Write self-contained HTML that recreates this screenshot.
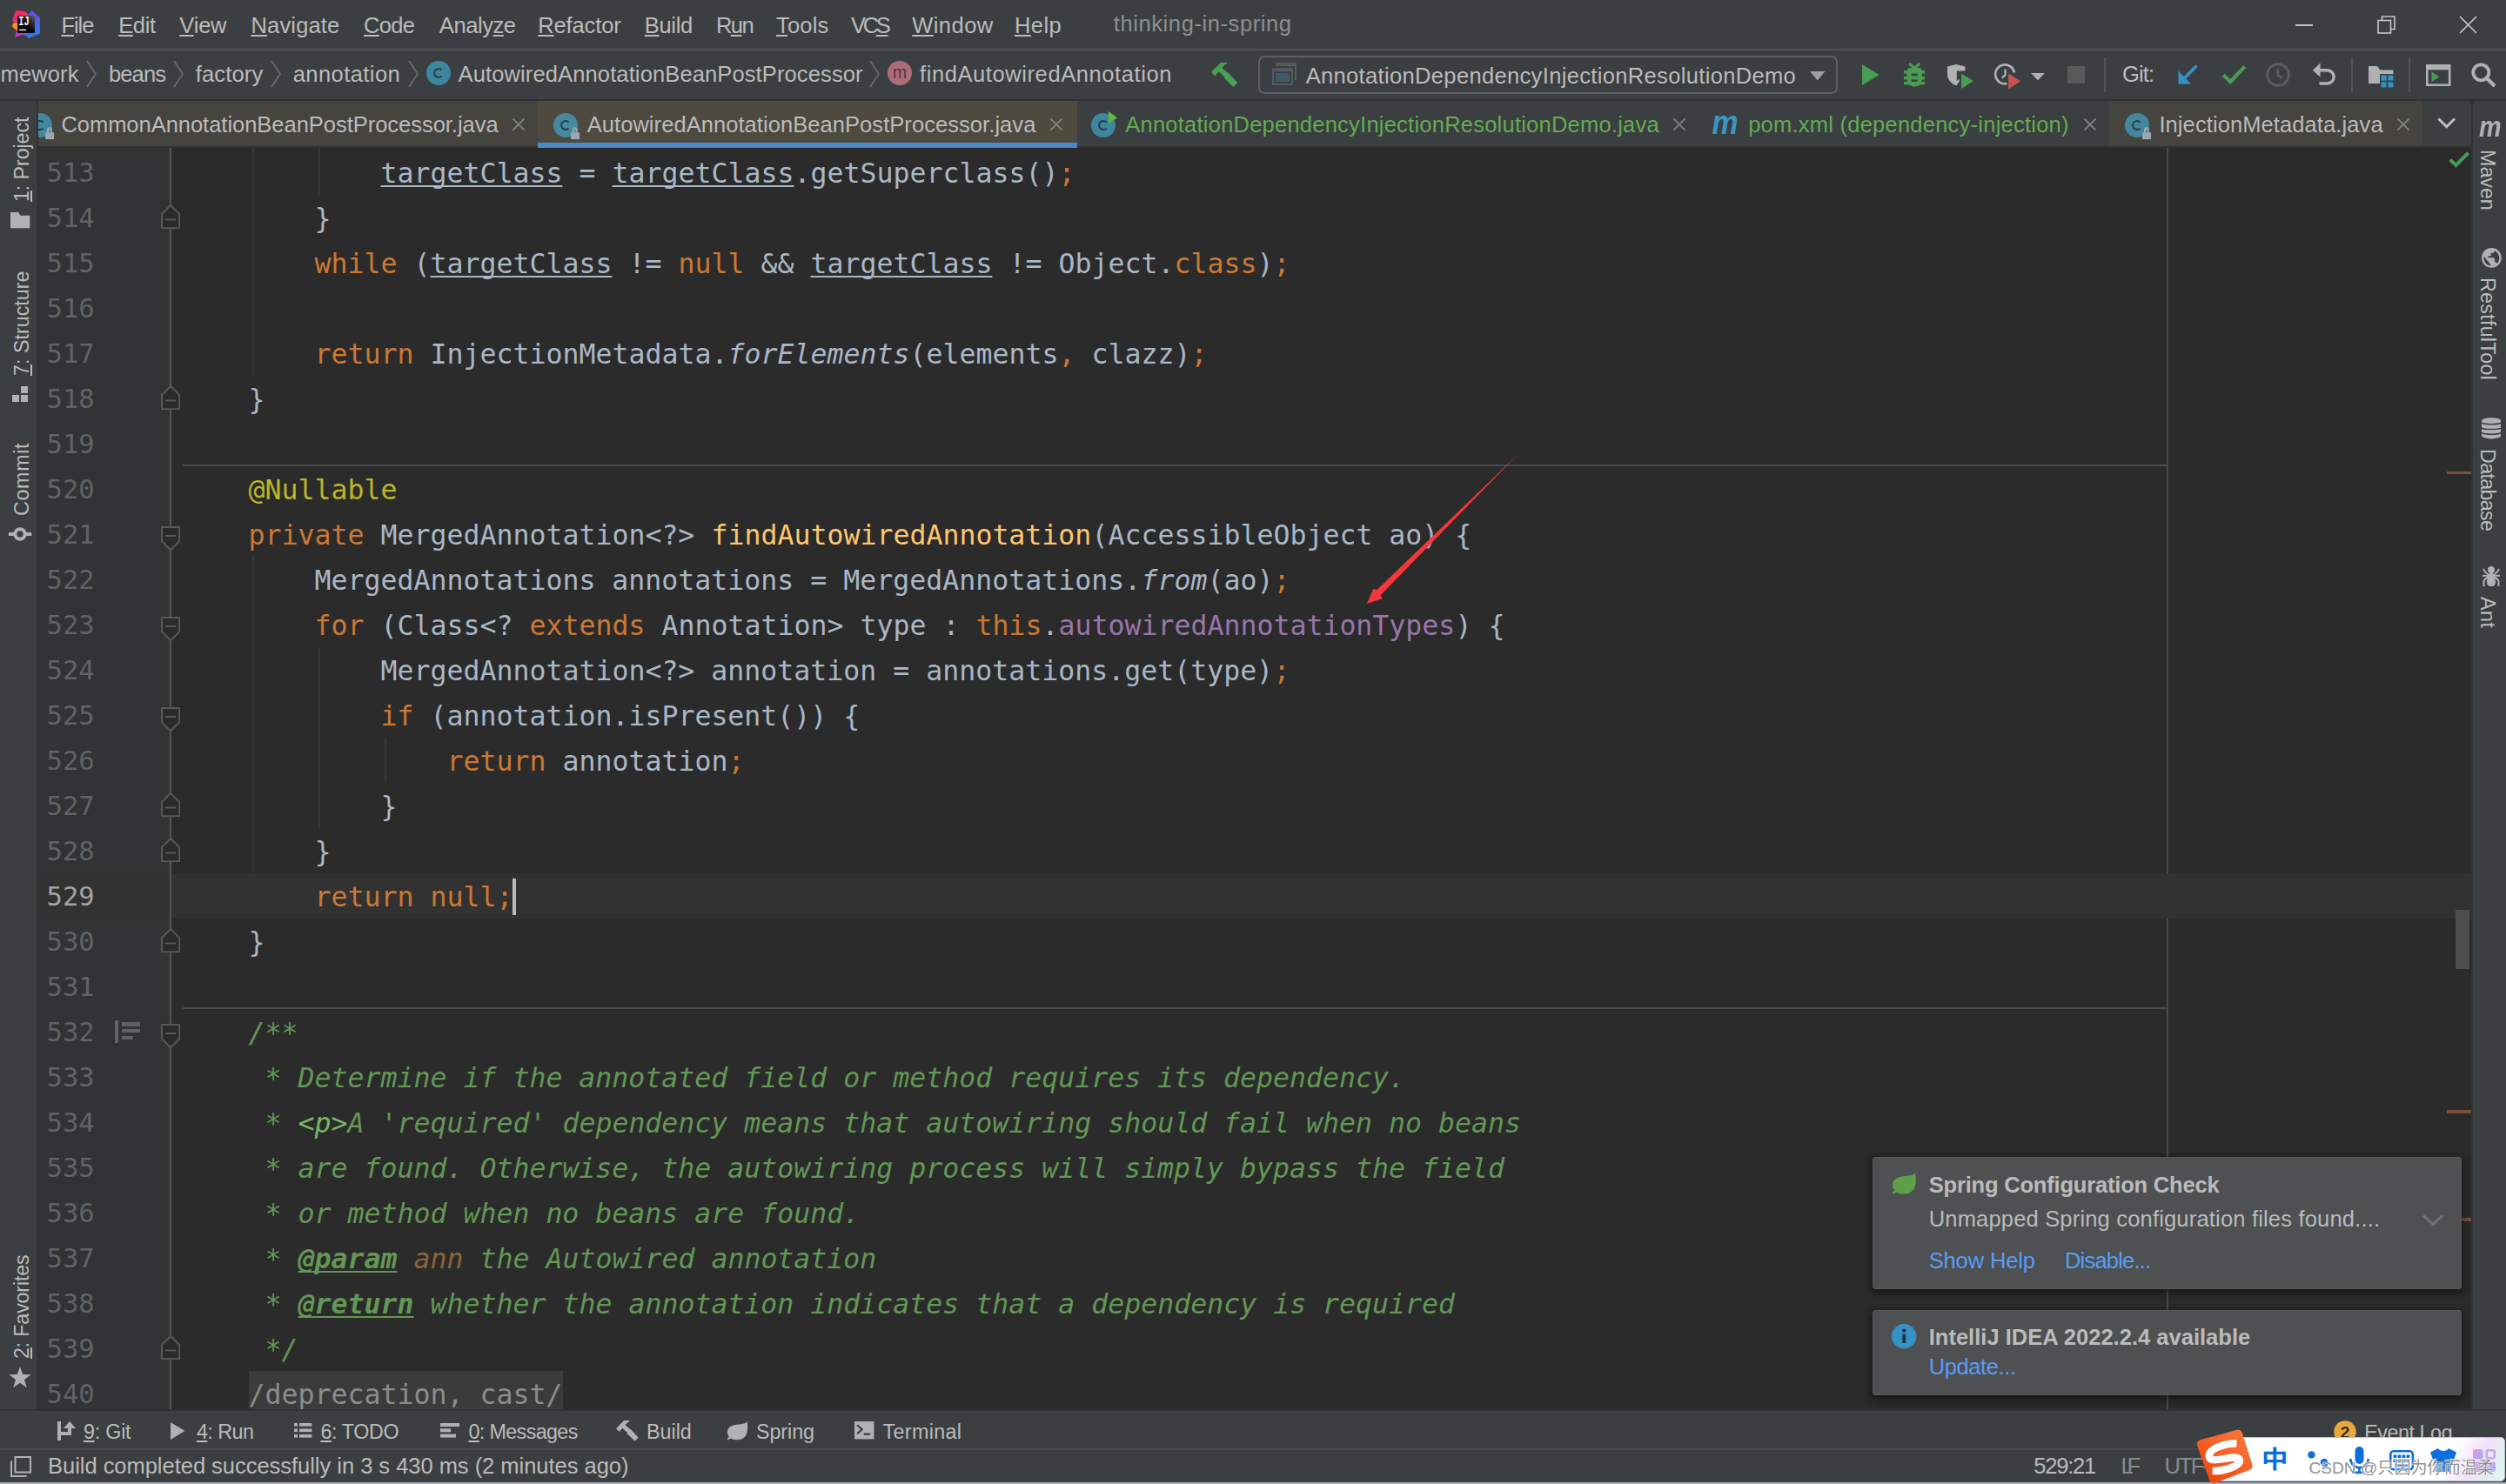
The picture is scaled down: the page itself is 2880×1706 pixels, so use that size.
<!DOCTYPE html>
<html lang="en"><head><meta charset="utf-8"><title>thinking-in-spring</title><style>
html,body{margin:0;padding:0}
body{width:2880px;height:1706px;overflow:hidden;background:#3c3f41;position:relative;font-family:"Liberation Sans",sans-serif;}
.t{position:absolute;white-space:pre;font-family:"Liberation Sans",sans-serif;display:block}
.t u{text-decoration:underline;text-decoration-thickness:2px;text-underline-offset:2.4px}
.c{position:absolute;white-space:pre;font-family:"DejaVu Sans Mono","Liberation Mono",monospace;font-size:31.56px;height:52px;line-height:52px;display:block}
.un{text-decoration:underline;text-decoration-thickness:2px;text-underline-offset:3px;text-decoration-skip-ink:none}
#ed{position:absolute;left:0;top:0;width:2880px;height:1706px}
</style></head>
<body>
<div style="position:absolute;left:0px;top:56px;width:2880px;height:2px;background:#515151;"></div>
<svg style="position:absolute;left:12px;top:10px;" width="36" height="36" viewBox="12 10 36 36"><defs><linearGradient id="lg1" x1="0.6" y1="0" x2="0.2" y2="1"><stop offset="0" stop-color="#ff2757"/><stop offset="1" stop-color="#e0308f"/></linearGradient>
<linearGradient id="lg2" x1="0" y1="0" x2="0.6" y2="1"><stop offset="0" stop-color="#2f6ef0"/><stop offset="0.45" stop-color="#6a4fe0"/><stop offset="1" stop-color="#2a7cf2"/></linearGradient>
<linearGradient id="lg3" x1="0" y1="1" x2="1" y2="0"><stop offset="0" stop-color="#a83cd8"/><stop offset="1" stop-color="#e03a9c"/></linearGradient>
<linearGradient id="lg4" x1="0" y1="1" x2="1" y2="0"><stop offset="0.45" stop-color="#000"/><stop offset="1" stop-color="#5a5a5a"/></linearGradient></defs>
<polygon points="18.2,12.1 28.8,13 33.2,17.6 33.2,26.5 19,26.5 14.1,23.9" fill="url(#lg1)"/>
<polygon points="15.4,26.2 22,26.2 22,35 19,34.9 13.9,30.5" fill="#fc8a1c"/>
<polygon points="36.5,11.9 45.9,20.2 45.9,38.5 33.5,43.9 27,39.5 32.6,16.4" fill="url(#lg2)"/>
<polygon points="19.6,34 31,36 29.3,38.6 16.9,42.9" fill="url(#lg3)"/>
<rect x="20.2" y="18.2" width="19.7" height="19.7" fill="url(#lg4)"/>
<rect x="22.1" y="33.7" width="8" height="1.4" fill="#fff"/>
<text x="21.2" y="29.1" font-family="Liberation Mono, monospace" font-weight="bold" font-size="14" fill="#fff" textLength="12.4" lengthAdjust="spacingAndGlyphs">IJ</text></svg>
<span class="t mn" style="left:70.40px;top:12.66px;height:33px;line-height:33px;font-size:25.5px;letter-spacing:-1.060px;color:#bbbbbb;"><u>F</u>ile</span>
<span class="t mn" style="left:136.20px;top:12.66px;height:33px;line-height:33px;font-size:25.5px;letter-spacing:-0.379px;color:#bbbbbb;"><u>E</u>dit</span>
<span class="t mn" style="left:206.30px;top:12.66px;height:33px;line-height:33px;font-size:25.5px;letter-spacing:-0.192px;color:#bbbbbb;"><u>V</u>iew</span>
<span class="t mn" style="left:288.50px;top:12.66px;height:33px;line-height:33px;font-size:25.5px;letter-spacing:0.150px;color:#bbbbbb;"><u>N</u>avigate</span>
<span class="t mn" style="left:418.00px;top:12.66px;height:33px;line-height:33px;font-size:25.5px;letter-spacing:-0.657px;color:#bbbbbb;"><u>C</u>ode</span>
<span class="t mn" style="left:504.80px;top:12.66px;height:33px;line-height:33px;font-size:25.5px;letter-spacing:-0.422px;color:#bbbbbb;">Analy<u>z</u>e</span>
<span class="t mn" style="left:618.30px;top:12.66px;height:33px;line-height:33px;font-size:25.5px;letter-spacing:-0.138px;color:#bbbbbb;"><u>R</u>efactor</span>
<span class="t mn" style="left:740.80px;top:12.66px;height:33px;line-height:33px;font-size:25.5px;letter-spacing:-0.328px;color:#bbbbbb;"><u>B</u>uild</span>
<span class="t mn" style="left:823.00px;top:12.66px;height:33px;line-height:33px;font-size:25.5px;letter-spacing:-1.583px;color:#bbbbbb;">R<u>u</u>n</span>
<span class="t mn" style="left:892.00px;top:12.66px;height:33px;line-height:33px;font-size:25.5px;letter-spacing:0.196px;color:#bbbbbb;"><u>T</u>ools</span>
<span class="t mn" style="left:978.00px;top:12.66px;height:33px;line-height:33px;font-size:25.5px;letter-spacing:-3.314px;color:#bbbbbb;">VC<u>S</u></span>
<span class="t mn" style="left:1048.20px;top:12.66px;height:33px;line-height:33px;font-size:25.5px;letter-spacing:0.469px;color:#bbbbbb;"><u>W</u>indow</span>
<span class="t mn" style="left:1166.00px;top:12.66px;height:33px;line-height:33px;font-size:25.5px;letter-spacing:0.416px;color:#bbbbbb;"><u>H</u>elp</span>
<span class="t " style="left:1279.80px;top:10.66px;height:33px;line-height:33px;font-size:25.5px;letter-spacing:0.589px;color:#8d8f90;">thinking-in-spring</span>
<div style="position:absolute;left:2638px;top:28px;width:20px;height:2px;background:#c4c6c7;"></div>
<svg style="position:absolute;left:2732px;top:18px;" width="21" height="21" viewBox="0 0 21 21"><path d="M5.5 5.5 V1 H20 V15.5 H15.5" fill="none" stroke="#c4c6c7" stroke-width="1.6"/><rect x="1" y="5.5" width="14.5" height="14.5" fill="none" stroke="#c4c6c7" stroke-width="1.6"/></svg>
<svg style="position:absolute;left:2826px;top:18px;" width="21" height="21" viewBox="0 0 21 21"><path d="M1 1 L20 20 M20 1 L1 20" stroke="#c4c6c7" stroke-width="1.7" fill="none"/></svg>
<div style="position:absolute;left:0px;top:114px;width:2880px;height:2px;background:#2f3132;"></div>
<span class="t " style="left:0.60px;top:68.66px;height:33px;line-height:33px;font-size:25.5px;letter-spacing:0.115px;color:#bbbbbb;">mework</span>
<span class="t " style="left:125.00px;top:68.66px;height:33px;line-height:33px;font-size:25.5px;letter-spacing:-0.872px;color:#bbbbbb;">beans</span>
<span class="t " style="left:224.70px;top:68.66px;height:33px;line-height:33px;font-size:25.5px;letter-spacing:0.162px;color:#bbbbbb;">factory</span>
<span class="t " style="left:336.70px;top:68.66px;height:33px;line-height:33px;font-size:25.5px;letter-spacing:0.432px;color:#bbbbbb;">annotation</span>
<span class="t " style="left:526.60px;top:68.66px;height:33px;line-height:33px;font-size:25.5px;letter-spacing:0.123px;color:#bbbbbb;">AutowiredAnnotationBeanPostProcessor</span>
<span class="t " style="left:1057.00px;top:68.66px;height:33px;line-height:33px;font-size:25.5px;letter-spacing:0.589px;color:#bbbbbb;">findAutowiredAnnotation</span>
<svg style="position:absolute;left:98px;top:68px;" width="14" height="34" viewBox="0 0 14 34"><path d="M2 2 L12 17.0 L2 32" fill="none" stroke="#6a6e71" stroke-width="1.6"/></svg>
<svg style="position:absolute;left:198px;top:68px;" width="14" height="34" viewBox="0 0 14 34"><path d="M2 2 L12 17.0 L2 32" fill="none" stroke="#6a6e71" stroke-width="1.6"/></svg>
<svg style="position:absolute;left:310px;top:68px;" width="14" height="34" viewBox="0 0 14 34"><path d="M2 2 L12 17.0 L2 32" fill="none" stroke="#6a6e71" stroke-width="1.6"/></svg>
<svg style="position:absolute;left:468.3px;top:68px;" width="14" height="34" viewBox="0 0 14 34"><path d="M2 2 L12 17.0 L2 32" fill="none" stroke="#6a6e71" stroke-width="1.6"/></svg>
<svg style="position:absolute;left:998px;top:68px;" width="14" height="34" viewBox="0 0 14 34"><path d="M2 2 L12 17.0 L2 32" fill="none" stroke="#6a6e71" stroke-width="1.6"/></svg>
<svg style="position:absolute;left:490px;top:70px;overflow:visible;" width="34" height="34" viewBox="0 0 34 34"><circle cx="14" cy="14" r="14" fill="#40b6e0" fill-opacity="0.6"/><path d="M17.6 10.5 A5 5 0 1 0 17.6 17.5" fill="none" stroke="#231f20" stroke-opacity="0.7" stroke-width="2.1"/></svg>
<svg style="position:absolute;left:1019.8px;top:70px;" width="28.2" height="28.2" viewBox="0 0 28.2 28.2"><circle cx="14" cy="14" r="14" fill="#f98b9e" fill-opacity="0.6"/><text x="14" y="19.9" font-family="Liberation Sans, sans-serif" font-size="19.3" text-anchor="middle" fill="#231f20" fill-opacity="0.7">m</text></svg>
<svg style="position:absolute;left:1392px;top:72px;" width="31.0" height="28.0" viewBox="0 0 31 28"><polygon fill="#4a9f57" points="0,10.9 10.9,0 18.2,0 18.2,1.4 15.4,2.5 12.2,6.2 20.4,12.6 30.2,22.9 25.4,27.9 15.1,18.0 15.1,16.6 8.7,10.3 4.2,15.4"/></svg>
<div style="position:absolute;left:1446px;top:64px;width:661.5px;height:40px;border:2px solid #5e6060;border-radius:7px;"></div>
<svg style="position:absolute;left:1462px;top:72px;" width="28" height="26" viewBox="0 0 28 26"><path d="M4 0 H28 V20 H26 V4 H4 Z" fill="#525b5f"/><path d="M0 6.2 H24 V26 H0 Z M2 10.2 V24 H22 V10.2 Z" fill="#525b5f" fill-rule="evenodd"/><rect x="4" y="12" width="16" height="10" fill="#3d5a66"/></svg>
<span class="t " style="left:1500.70px;top:70.66px;height:33px;line-height:33px;font-size:25.5px;letter-spacing:0.345px;color:#bbbbbb;">AnnotationDependencyInjectionResolutionDemo</span>
<svg style="position:absolute;left:2079.5px;top:81.5px;" width="17.5" height="10.5" viewBox="0 0 17.5 10.5"><path d="M0 0 L17.5 0 L8.75 10.5 Z" fill="#9c9ea0"/></svg>
<svg style="position:absolute;left:2140px;top:74px;" width="19.7" height="24" viewBox="0 0 19.7 24"><path d="M0 0 L19.7 12.0 L0 24 Z" fill="#499c54"/></svg>
<svg style="position:absolute;left:2188px;top:72px;" width="24.4" height="28" viewBox="0 0 24.4 28"><path d="M6.2 0.9 L12.2 6.6 L18.2 0.9" fill="none" stroke="#499c54" stroke-width="3.2"/>
<g fill="#499c54"><path d="M7.5 6 H16.9 A4 4 0 0 1 20.9 10 V19.2 A8.7 8.5 0 0 1 3.5 19.2 V10 A4 4 0 0 1 7.5 6 Z"/>
<rect x="0" y="9" width="24.4" height="3.5"/><rect x="0" y="15.8" width="24.4" height="3.6"/><rect x="0" y="22" width="24.4" height="3.4"/></g>
<rect x="8.6" y="12.5" width="7.2" height="2.8" fill="#3c3f41"/><rect x="8.6" y="19.4" width="7.2" height="2.5" fill="#3c3f41"/></svg>
<svg style="position:absolute;left:2238px;top:74px;" width="30" height="28" viewBox="0 0 30 28"><path d="M0 2.5 L10.3 0 L20.5 2.5 V7.5 H10.8 V19 L13.8 17 V19.5 L10.3 24.5 C3.5 21.5 0 17 0 11 Z" fill="#afb1b3"/><path d="M16 10.5 L30 19 L16 28 Z" fill="#499c54"/></svg>
<svg style="position:absolute;left:2291.5px;top:72.5px;" width="31" height="30" viewBox="0 0 31 30"><path d="M14.5 23.1 A11 11 0 1 1 23 10.5" fill="none" stroke="#afb1b3" stroke-width="2.6"/><path d="M12.5 6.5 V13 L8.8 16.7" fill="none" stroke="#afb1b3" stroke-width="2.2"/><path d="M16.2 11.5 L30.2 20.2 L16.2 29.5 Z" fill="#c75450"/></svg>
<svg style="position:absolute;left:2334px;top:83.7px;" width="16" height="8.3" viewBox="0 0 16 8.3"><path d="M0 0 L16 0 L8.0 8.3 Z" fill="#afb1b3"/></svg>
<div style="position:absolute;left:2376px;top:76px;width:20px;height:20px;background:#595959;"></div>
<div style="position:absolute;left:2418px;top:66px;width:2px;height:40px;background:#515456;"></div>
<span class="t " style="left:2438.90px;top:68.66px;height:33px;line-height:33px;font-size:25.5px;letter-spacing:-0.793px;color:#bbbbbb;">Git:</span>
<svg style="position:absolute;left:2503px;top:74px;" width="24" height="23" viewBox="0 0 24 23"><path d="M21.5 1.5 L5 18.5" stroke="#3592c4" stroke-width="3.6" fill="none"/><path d="M0.5 7.5 V22.5 H15 Z" fill="#3592c4"/></svg>
<svg style="position:absolute;left:2553px;top:73.5px;" width="29" height="23" viewBox="0 0 29 23"><path d="M2.2 12.3 L10.3 20 L26.8 2.5" stroke="#499c54" stroke-width="4.2" fill="none"/></svg>
<svg style="position:absolute;left:2604px;top:72px;" width="28" height="28" viewBox="0 0 28 28"><circle cx="14" cy="14" r="12.3" fill="none" stroke="#5a5c5e" stroke-width="3"/><path d="M13.8 7 V14.5 L19 17.8" fill="none" stroke="#5a5c5e" stroke-width="2.6"/></svg>
<svg style="position:absolute;left:2657px;top:72px;" width="28" height="27" viewBox="0 0 28 27"><path d="M9.5 0.5 L0.8 8.7 L9.5 16.5 Z" fill="#afb1b3"/><path d="M8 8.7 H17.5 A7.6 7.6 0 0 1 17.5 24 H8.5" fill="none" stroke="#afb1b3" stroke-width="3.4"/></svg>
<div style="position:absolute;left:2702px;top:66px;width:2px;height:40px;background:#515456;"></div>
<svg style="position:absolute;left:2722px;top:76px;" width="29" height="25" viewBox="0 0 29 25"><path d="M0 0 H10 L13.5 4.5 H28.4 V9 H13 V20 H0 Z" fill="#afb1b3"/><g fill="#3592c4"><rect x="14.6" y="10.6" width="6" height="6"/><rect x="22.4" y="10.6" width="6" height="6"/><rect x="14.6" y="18.4" width="6" height="6"/><rect x="22.4" y="18.4" width="6" height="6"/></g></svg>
<div style="position:absolute;left:2768px;top:66px;width:2px;height:40px;background:#515456;"></div>
<svg style="position:absolute;left:2787.5px;top:73.5px;" width="29" height="25" viewBox="0 0 29 25"><path d="M0 0 H28.5 V25 H0 Z M2.6 6.2 V22.4 H25.9 V6.2 Z" fill="#afb1b3" fill-rule="evenodd"/><path d="M6.5 8.4 L15.5 14.2 L6.5 20 Z" fill="#499c54"/></svg>
<svg style="position:absolute;left:2840px;top:72px;" width="29" height="29" viewBox="0 0 29 29"><circle cx="11.3" cy="11.3" r="9" fill="none" stroke="#afb1b3" stroke-width="3.8"/><path d="M17.5 17.5 L27 27" stroke="#afb1b3" stroke-width="4.4" fill="none"/></svg>
<div style="position:absolute;left:42px;top:170px;width:153px;height:1450px;background:#313335;"></div>
<div style="position:absolute;left:197px;top:170px;width:2643px;height:1450px;background:#2b2b2b;"></div>
<div style="position:absolute;left:2490px;top:170px;width:2px;height:1450px;background:#4b4b4b;"></div>
<div style="position:absolute;left:290px;top:170px;width:2px;height:262px;background:#373737;"></div>
<div style="position:absolute;left:366px;top:170px;width:2px;height:54px;background:#373737;"></div>
<div style="position:absolute;left:290px;top:640px;width:2px;height:416px;background:#373737;"></div>
<div style="position:absolute;left:366px;top:744px;width:2px;height:208px;background:#373737;"></div>
<div style="position:absolute;left:442px;top:848px;width:2px;height:52px;background:#373737;"></div>
<div style="position:absolute;left:42px;top:1004px;width:153px;height:52px;background:#323232;"></div>
<div style="position:absolute;left:197px;top:1004px;width:2644px;height:52px;background:#323232;"></div>
<span class="c" style="left:53.6px;top:173px;color:#606366;font-size:30.5px">513</span>
<span class="c un" style="left:437.5px;top:173px;color:#a9b7c6;">targetClass</span>
<span class="c" style="left:646.5px;top:173px;color:#a9b7c6;"> = </span>
<span class="c un" style="left:703.5px;top:173px;color:#a9b7c6;">targetClass</span>
<span class="c" style="left:912.5px;top:173px;color:#a9b7c6;">.getSuperclass()</span>
<span class="c" style="left:1216.5px;top:173px;color:#cc7832;">;</span>
<span class="c" style="left:53.6px;top:225px;color:#606366;font-size:30.5px">514</span>
<span class="c" style="left:361.5px;top:225px;color:#a9b7c6;">}</span>
<span class="c" style="left:53.6px;top:277px;color:#606366;font-size:30.5px">515</span>
<span class="c" style="left:361.5px;top:277px;color:#cc7832;">while</span>
<span class="c" style="left:475.5px;top:277px;color:#a9b7c6;">(</span>
<span class="c un" style="left:494.5px;top:277px;color:#a9b7c6;">targetClass</span>
<span class="c" style="left:722.5px;top:277px;color:#a9b7c6;">!= </span>
<span class="c" style="left:779.5px;top:277px;color:#cc7832;">null</span>
<span class="c" style="left:874.5px;top:277px;color:#a9b7c6;">&amp;&amp; </span>
<span class="c un" style="left:931.5px;top:277px;color:#a9b7c6;">targetClass</span>
<span class="c" style="left:1159.5px;top:277px;color:#a9b7c6;">!= Object.</span>
<span class="c" style="left:1349.5px;top:277px;color:#cc7832;">class</span>
<span class="c" style="left:1444.5px;top:277px;color:#a9b7c6;">)</span>
<span class="c" style="left:1463.5px;top:277px;color:#cc7832;">;</span>
<span class="c" style="left:53.6px;top:329px;color:#606366;font-size:30.5px">516</span>
<span class="c" style="left:53.6px;top:381px;color:#606366;font-size:30.5px">517</span>
<span class="c" style="left:361.5px;top:381px;color:#cc7832;">return</span>
<span class="c" style="left:494.5px;top:381px;color:#a9b7c6;">InjectionMetadata.</span>
<span class="c" style="left:836.5px;top:381px;color:#a9b7c6;font-style:italic;">forElements</span>
<span class="c" style="left:1045.5px;top:381px;color:#a9b7c6;">(elements</span>
<span class="c" style="left:1216.5px;top:381px;color:#cc7832;">,</span>
<span class="c" style="left:1254.5px;top:381px;color:#a9b7c6;">clazz)</span>
<span class="c" style="left:1368.5px;top:381px;color:#cc7832;">;</span>
<span class="c" style="left:53.6px;top:433px;color:#606366;font-size:30.5px">518</span>
<span class="c" style="left:285.5px;top:433px;color:#a9b7c6;">}</span>
<span class="c" style="left:53.6px;top:485px;color:#606366;font-size:30.5px">519</span>
<span class="c" style="left:53.6px;top:537px;color:#606366;font-size:30.5px">520</span>
<span class="c" style="left:285.5px;top:537px;color:#bbb529;">@Nullable</span>
<span class="c" style="left:53.6px;top:589px;color:#606366;font-size:30.5px">521</span>
<span class="c" style="left:285.5px;top:589px;color:#cc7832;">private</span>
<span class="c" style="left:437.5px;top:589px;color:#a9b7c6;">MergedAnnotation&lt;?&gt;</span>
<span class="c" style="left:817.5px;top:589px;color:#ffc66d;">findAutowiredAnnotation</span>
<span class="c" style="left:1254.5px;top:589px;color:#a9b7c6;">(AccessibleObject ao) {</span>
<span class="c" style="left:53.6px;top:641px;color:#606366;font-size:30.5px">522</span>
<span class="c" style="left:361.5px;top:641px;color:#a9b7c6;">MergedAnnotations annotations = MergedAnnotations.</span>
<span class="c" style="left:1311.5px;top:641px;color:#a9b7c6;font-style:italic;">from</span>
<span class="c" style="left:1387.5px;top:641px;color:#a9b7c6;">(ao)</span>
<span class="c" style="left:1463.5px;top:641px;color:#cc7832;">;</span>
<span class="c" style="left:53.6px;top:693px;color:#606366;font-size:30.5px">523</span>
<span class="c" style="left:361.5px;top:693px;color:#cc7832;">for</span>
<span class="c" style="left:437.5px;top:693px;color:#a9b7c6;">(Class&lt;? </span>
<span class="c" style="left:608.5px;top:693px;color:#cc7832;">extends</span>
<span class="c" style="left:760.5px;top:693px;color:#a9b7c6;">Annotation&gt; type : </span>
<span class="c" style="left:1121.5px;top:693px;color:#cc7832;">this</span>
<span class="c" style="left:1197.5px;top:693px;color:#a9b7c6;">.</span>
<span class="c" style="left:1216.5px;top:693px;color:#9876aa;">autowiredAnnotationTypes</span>
<span class="c" style="left:1672.5px;top:693px;color:#a9b7c6;">) {</span>
<span class="c" style="left:53.6px;top:745px;color:#606366;font-size:30.5px">524</span>
<span class="c" style="left:437.5px;top:745px;color:#a9b7c6;">MergedAnnotation&lt;?&gt; annotation = annotations.get(type)</span>
<span class="c" style="left:1463.5px;top:745px;color:#cc7832;">;</span>
<span class="c" style="left:53.6px;top:797px;color:#606366;font-size:30.5px">525</span>
<span class="c" style="left:437.5px;top:797px;color:#cc7832;">if</span>
<span class="c" style="left:494.5px;top:797px;color:#a9b7c6;">(annotation.isPresent()) {</span>
<span class="c" style="left:53.6px;top:849px;color:#606366;font-size:30.5px">526</span>
<span class="c" style="left:513.5px;top:849px;color:#cc7832;">return</span>
<span class="c" style="left:646.5px;top:849px;color:#a9b7c6;">annotation</span>
<span class="c" style="left:836.5px;top:849px;color:#cc7832;">;</span>
<span class="c" style="left:53.6px;top:901px;color:#606366;font-size:30.5px">527</span>
<span class="c" style="left:437.5px;top:901px;color:#a9b7c6;">}</span>
<span class="c" style="left:53.6px;top:953px;color:#606366;font-size:30.5px">528</span>
<span class="c" style="left:361.5px;top:953px;color:#a9b7c6;">}</span>
<span class="c" style="left:53.6px;top:1005px;color:#a4a3a3;font-size:30.5px">529</span>
<span class="c" style="left:361.5px;top:1005px;color:#cc7832;">return</span>
<span class="c" style="left:494.5px;top:1005px;color:#cc7832;">null</span>
<span class="c" style="left:570.5px;top:1005px;color:#cc7832;">;</span>
<span class="c" style="left:53.6px;top:1057px;color:#606366;font-size:30.5px">530</span>
<span class="c" style="left:285.5px;top:1057px;color:#a9b7c6;">}</span>
<span class="c" style="left:53.6px;top:1109px;color:#606366;font-size:30.5px">531</span>
<span class="c" style="left:53.6px;top:1161px;color:#606366;font-size:30.5px">532</span>
<span class="c" style="left:285.5px;top:1161px;color:#629755;font-style:italic;">/**</span>
<span class="c" style="left:53.6px;top:1213px;color:#606366;font-size:30.5px">533</span>
<span class="c" style="left:304.5px;top:1213px;color:#629755;font-style:italic;">* Determine if the annotated field or method requires its dependency.</span>
<span class="c" style="left:53.6px;top:1265px;color:#606366;font-size:30.5px">534</span>
<span class="c" style="left:304.5px;top:1265px;color:#629755;font-style:italic;">* </span>
<span class="c" style="left:342.5px;top:1265px;color:#77b767;font-style:italic;">&lt;p&gt;</span>
<span class="c" style="left:399.5px;top:1265px;color:#629755;font-style:italic;">A 'required' dependency means that autowiring should fail when no beans</span>
<span class="c" style="left:53.6px;top:1317px;color:#606366;font-size:30.5px">535</span>
<span class="c" style="left:304.5px;top:1317px;color:#629755;font-style:italic;">* are found. Otherwise, the autowiring process will simply bypass the field</span>
<span class="c" style="left:53.6px;top:1369px;color:#606366;font-size:30.5px">536</span>
<span class="c" style="left:304.5px;top:1369px;color:#629755;font-style:italic;">* or method when no beans are found.</span>
<span class="c" style="left:53.6px;top:1421px;color:#606366;font-size:30.5px">537</span>
<span class="c" style="left:304.5px;top:1421px;color:#629755;font-style:italic;">* </span>
<span class="c un" style="left:342.5px;top:1421px;color:#629755;font-style:italic;font-weight:bold;">@param</span>
<span class="c" style="left:475.5px;top:1421px;color:#8a653b;font-style:italic;">ann</span>
<span class="c" style="left:551.5px;top:1421px;color:#629755;font-style:italic;">the Autowired annotation</span>
<span class="c" style="left:53.6px;top:1473px;color:#606366;font-size:30.5px">538</span>
<span class="c" style="left:304.5px;top:1473px;color:#629755;font-style:italic;">* </span>
<span class="c un" style="left:342.5px;top:1473px;color:#629755;font-style:italic;font-weight:bold;">@return</span>
<span class="c" style="left:494.5px;top:1473px;color:#629755;font-style:italic;">whether the annotation indicates that a dependency is required</span>
<span class="c" style="left:53.6px;top:1525px;color:#606366;font-size:30.5px">539</span>
<span class="c" style="left:304.5px;top:1525px;color:#629755;font-style:italic;">*/</span>
<span class="c" style="left:53.6px;top:1577px;color:#606366;font-size:30.5px">540</span>
<div style="position:absolute;left:285.5px;top:1576px;width:361.0px;height:52px;background:#3b3b3b;"></div>
<span class="c" style="left:285.5px;top:1577px;color:#8c8c8c;">/deprecation, cast/</span>
<div style="position:absolute;left:195px;top:170px;width:2px;height:1450px;background:#555555;"></div>
<div style="position:absolute;left:210px;top:534px;width:2280px;height:2px;background:#4b4b4b;"></div>
<div style="position:absolute;left:210px;top:1158px;width:2280px;height:2px;background:#4b4b4b;"></div>
<svg style="position:absolute;left:184.9px;top:235px;" width="22.2" height="28.3" viewBox="0 0 22.2 28.3"><path d="M11.1 1 L21.2 11.1 V27.3 H1 V11.1 Z" fill="#2b2b2b" stroke="#585858" stroke-width="2"/><rect x="5" y="16.5" width="12.2" height="2" fill="#585858"/></svg>
<svg style="position:absolute;left:184.9px;top:443px;" width="22.2" height="28.3" viewBox="0 0 22.2 28.3"><path d="M11.1 1 L21.2 11.1 V27.3 H1 V11.1 Z" fill="#2b2b2b" stroke="#585858" stroke-width="2"/><rect x="5" y="16.5" width="12.2" height="2" fill="#585858"/></svg>
<svg style="position:absolute;left:184.9px;top:605px;" width="22.2" height="28.3" viewBox="0 0 22.2 28.3"><path d="M1 1 H21.2 V17.2 L11.1 27.3 L1 17.2 Z" fill="#2b2b2b" stroke="#585858" stroke-width="2"/><rect x="5" y="10" width="12.2" height="2" fill="#585858"/></svg>
<svg style="position:absolute;left:184.9px;top:709px;" width="22.2" height="28.3" viewBox="0 0 22.2 28.3"><path d="M1 1 H21.2 V17.2 L11.1 27.3 L1 17.2 Z" fill="#2b2b2b" stroke="#585858" stroke-width="2"/><rect x="5" y="10" width="12.2" height="2" fill="#585858"/></svg>
<svg style="position:absolute;left:184.9px;top:813px;" width="22.2" height="28.3" viewBox="0 0 22.2 28.3"><path d="M1 1 H21.2 V17.2 L11.1 27.3 L1 17.2 Z" fill="#2b2b2b" stroke="#585858" stroke-width="2"/><rect x="5" y="10" width="12.2" height="2" fill="#585858"/></svg>
<svg style="position:absolute;left:184.9px;top:911px;" width="22.2" height="28.3" viewBox="0 0 22.2 28.3"><path d="M11.1 1 L21.2 11.1 V27.3 H1 V11.1 Z" fill="#2b2b2b" stroke="#585858" stroke-width="2"/><rect x="5" y="16.5" width="12.2" height="2" fill="#585858"/></svg>
<svg style="position:absolute;left:184.9px;top:963px;" width="22.2" height="28.3" viewBox="0 0 22.2 28.3"><path d="M11.1 1 L21.2 11.1 V27.3 H1 V11.1 Z" fill="#2b2b2b" stroke="#585858" stroke-width="2"/><rect x="5" y="16.5" width="12.2" height="2" fill="#585858"/></svg>
<svg style="position:absolute;left:184.9px;top:1067px;" width="22.2" height="28.3" viewBox="0 0 22.2 28.3"><path d="M11.1 1 L21.2 11.1 V27.3 H1 V11.1 Z" fill="#2b2b2b" stroke="#585858" stroke-width="2"/><rect x="5" y="16.5" width="12.2" height="2" fill="#585858"/></svg>
<svg style="position:absolute;left:184.9px;top:1177px;" width="22.2" height="28.3" viewBox="0 0 22.2 28.3"><path d="M1 1 H21.2 V17.2 L11.1 27.3 L1 17.2 Z" fill="#2b2b2b" stroke="#585858" stroke-width="2"/><rect x="5" y="10" width="12.2" height="2" fill="#585858"/></svg>
<svg style="position:absolute;left:184.9px;top:1535px;" width="22.2" height="28.3" viewBox="0 0 22.2 28.3"><path d="M11.1 1 L21.2 11.1 V27.3 H1 V11.1 Z" fill="#2b2b2b" stroke="#585858" stroke-width="2"/><rect x="5" y="16.5" width="12.2" height="2" fill="#585858"/></svg>
<div style="position:absolute;left:132px;top:1172.5px;width:4px;height:26.5px;background:#5c6265;"></div><div style="position:absolute;left:140px;top:1175px;width:21px;height:4.5px;background:#5c6265;"></div><div style="position:absolute;left:140px;top:1183px;width:21px;height:4.2px;background:#5c6265;"></div><div style="position:absolute;left:140px;top:1191px;width:13px;height:4.2px;background:#5c6265;"></div>
<div style="position:absolute;left:589px;top:1010px;width:4px;height:42px;background:#bbbbbb;"></div>
<div style="position:absolute;left:2812px;top:541.5px;width:28px;height:3.5px;background:#7a4f3c;"></div>
<div style="position:absolute;left:2812px;top:1276px;width:28px;height:3.5px;background:#7a4f3c;"></div>
<div style="position:absolute;left:2812px;top:1400px;width:28px;height:3.5px;background:#7a4f3c;"></div>
<div style="position:absolute;left:2822px;top:1046px;width:16px;height:68px;background:#4e4e4e;"></div>
<svg style="position:absolute;left:2814px;top:174px;" width="25" height="19" viewBox="0 0 25 19"><path d="M1.8 9.6 L8.6 16 L22.6 1.6" fill="none" stroke="#499c54" stroke-width="4"/></svg>
<svg style="position:absolute;left:1560px;top:515px;" width="190" height="185" viewBox="1560 515 190 185"><polygon points="1743.8,523 1582.2,678.2 1578.2,676.7 1570.8,693.9 1588.9,688 1586.6,684.2" fill="#f5363b"/></svg>
<div style="position:absolute;left:42px;top:168px;width:2798px;height:2px;background:#323232;"></div>
<div style="position:absolute;left:42px;top:116px;width:1.5px;height:52px;background:#323232;"></div>
<div style="position:absolute;left:43.5px;top:116px;width:574.2px;height:52px;background:#45443f;"></div>
<div style="position:absolute;left:617.7px;top:116px;width:620.0999999999999px;height:52px;background:#4e4a40;"></div>
<div style="position:absolute;left:617.7px;top:164px;width:620.0999999999999px;height:6px;background:#4a88c7;"></div>
<div style="position:absolute;left:2423.8px;top:116px;width:360.1999999999998px;height:52px;background:#45443f;"></div>
<div style="position:absolute;left:43.5px;top:116px;width:60px;height:52px;overflow:hidden"><svg style="position:absolute;left:-11.5px;top:14px;overflow:visible;" width="34" height="34" viewBox="0 0 34 34"><circle cx="14" cy="14" r="14" fill="#40b6e0" fill-opacity="0.6"/><path d="M17.6 10.5 A5 5 0 1 0 17.6 17.5" fill="none" stroke="#231f20" stroke-opacity="0.7" stroke-width="2.1"/><rect x="20" y="22.2" width="10.1" height="7.9" fill="#9aa7b0"/><path d="M23 22.6 V19.1 a1.9 1.9 0 0 1 3.8 0 V22.6" fill="none" stroke="#9aa7b0" stroke-width="2"/></svg></div>
<span class="t " style="left:70.40px;top:126.96px;height:33px;line-height:33px;font-size:25.5px;letter-spacing:-0.027px;color:#bbbbbb;">CommonAnnotationBeanPostProcessor.java</span>
<svg style="position:absolute;left:586px;top:133px;" width="20" height="20" viewBox="0 0 20 20"><path d="M3.4000000000000004 3.4000000000000004 L16.6 16.6 M16.6 3.4000000000000004 L3.4000000000000004 16.6" stroke="#7c8082" stroke-width="2" fill="none"/></svg>
<svg style="position:absolute;left:636px;top:130px;overflow:visible;" width="34" height="34" viewBox="0 0 34 34"><circle cx="14" cy="14" r="14" fill="#40b6e0" fill-opacity="0.6"/><path d="M17.6 10.5 A5 5 0 1 0 17.6 17.5" fill="none" stroke="#231f20" stroke-opacity="0.7" stroke-width="2.1"/><rect x="20" y="22.2" width="10.1" height="7.9" fill="#9aa7b0"/><path d="M23 22.6 V19.1 a1.9 1.9 0 0 1 3.8 0 V22.6" fill="none" stroke="#9aa7b0" stroke-width="2"/></svg>
<span class="t " style="left:674.70px;top:126.96px;height:33px;line-height:33px;font-size:25.5px;letter-spacing:0.063px;color:#bbbbbb;">AutowiredAnnotationBeanPostProcessor.java</span>
<svg style="position:absolute;left:1203.5px;top:133px;" width="20" height="20" viewBox="0 0 20 20"><path d="M3.4000000000000004 3.4000000000000004 L16.6 16.6 M16.6 3.4000000000000004 L3.4000000000000004 16.6" stroke="#7c8082" stroke-width="2" fill="none"/></svg>
<svg style="position:absolute;left:1254px;top:130px;overflow:visible;" width="34" height="34" viewBox="0 0 34 34"><circle cx="14" cy="14" r="14" fill="#40b6e0" fill-opacity="0.6"/><path d="M17.6 10.5 A5 5 0 1 0 17.6 17.5" fill="none" stroke="#231f20" stroke-opacity="0.7" stroke-width="2.1"/><path d="M19.8 -2 L30.1 5.2 L19.8 12.2 Z" fill="#62b543"/></svg>
<span class="t " style="left:1293.30px;top:126.96px;height:33px;line-height:33px;font-size:25.5px;letter-spacing:0.232px;color:#62ac51;">AnnotationDependencyInjectionResolutionDemo.java</span>
<svg style="position:absolute;left:1920px;top:133px;" width="20" height="20" viewBox="0 0 20 20"><path d="M3.4000000000000004 3.4000000000000004 L16.6 16.6 M16.6 3.4000000000000004 L3.4000000000000004 16.6" stroke="#7c8082" stroke-width="2" fill="none"/></svg>
<svg style="position:absolute;left:1964px;top:124px;" width="40" height="36" viewBox="0 0 40 36"><text x="3.5" y="30" font-family="Liberation Sans, sans-serif" font-weight="bold" font-style="italic" font-size="38.5" textLength="30" lengthAdjust="spacingAndGlyphs" fill="#3a97c2">m</text></svg>
<span class="t " style="left:2009.20px;top:126.96px;height:33px;line-height:33px;font-size:25.5px;letter-spacing:0.238px;color:#62ac51;">pom.xml (dependency-injection)</span>
<svg style="position:absolute;left:2392px;top:133px;" width="20" height="20" viewBox="0 0 20 20"><path d="M3.4000000000000004 3.4000000000000004 L16.6 16.6 M16.6 3.4000000000000004 L3.4000000000000004 16.6" stroke="#7c8082" stroke-width="2" fill="none"/></svg>
<svg style="position:absolute;left:2442px;top:130px;overflow:visible;" width="34" height="34" viewBox="0 0 34 34"><circle cx="14" cy="14" r="14" fill="#40b6e0" fill-opacity="0.6"/><path d="M17.6 10.5 A5 5 0 1 0 17.6 17.5" fill="none" stroke="#231f20" stroke-opacity="0.7" stroke-width="2.1"/><rect x="20" y="22.2" width="10.1" height="7.9" fill="#9aa7b0"/><path d="M23 22.6 V19.1 a1.9 1.9 0 0 1 3.8 0 V22.6" fill="none" stroke="#9aa7b0" stroke-width="2"/></svg>
<span class="t " style="left:2481.40px;top:126.96px;height:33px;line-height:33px;font-size:25.5px;letter-spacing:0.096px;color:#bbbbbb;">InjectionMetadata.java</span>
<svg style="position:absolute;left:2752px;top:133px;" width="20" height="20" viewBox="0 0 20 20"><path d="M3.4000000000000004 3.4000000000000004 L16.6 16.6 M16.6 3.4000000000000004 L3.4000000000000004 16.6" stroke="#7c8082" stroke-width="2" fill="none"/></svg>
<svg style="position:absolute;left:2800px;top:134px;" width="24" height="16" viewBox="0 0 24 16"><path d="M2.5 2.5 L11.7 11.7 L21 2.5" fill="none" stroke="#c0c2c3" stroke-width="3"/></svg>
<div style="position:absolute;left:33.0px;top:231.5px;width:0;height:0;transform:rotate(-90deg);transform-origin:0 0"><span class="t " style="left:0.00px;top:-23.07px;height:30px;line-height:30px;font-size:23.3px;letter-spacing:-0.102px;color:#bbbbbb;"><u>1</u>: Project</span></div>
<svg style="position:absolute;left:12px;top:244px;" width="23" height="19" viewBox="0 0 23 19"><path d="M0 0 H9.2 L11.4 3.8 H22.3 V18.2 H0 Z" fill="#afb1b3"/></svg>
<div style="position:absolute;left:33.0px;top:431.5px;width:0;height:0;transform:rotate(-90deg);transform-origin:0 0"><span class="t " style="left:0.00px;top:-23.07px;height:30px;line-height:30px;font-size:23.3px;letter-spacing:0.006px;color:#bbbbbb;"><u>7</u>: Structure</span></div>
<div style="position:absolute;left:24px;top:444px;width:8px;height:8px;background:#afb1b3;"></div><div style="position:absolute;left:14px;top:454px;width:8px;height:8px;background:#afb1b3;"></div><div style="position:absolute;left:24px;top:454px;width:8px;height:8px;background:#afb1b3;"></div>
<div style="position:absolute;left:33.0px;top:592.6px;width:0;height:0;transform:rotate(-90deg);transform-origin:0 0"><span class="t " style="left:0.00px;top:-23.07px;height:30px;line-height:30px;font-size:23.3px;letter-spacing:0.671px;color:#bbbbbb;">Commit</span></div>
<svg style="position:absolute;left:9px;top:604px;" width="28" height="20" viewBox="0 0 28 20"><rect x="0.9" y="8" width="26.3" height="4" fill="#afb1b3"/><circle cx="14" cy="10" r="5.7" fill="#3c3f41" stroke="#afb1b3" stroke-width="4"/></svg>
<div style="position:absolute;left:33.0px;top:1561.9px;width:0;height:0;transform:rotate(-90deg);transform-origin:0 0"><span class="t " style="left:0.00px;top:-23.07px;height:30px;line-height:30px;font-size:23.3px;letter-spacing:-0.193px;color:#bbbbbb;"><u>2</u>: Favorites</span></div>
<svg style="position:absolute;left:10px;top:1571px;" width="26" height="25" viewBox="0 0 26 25"><path d="M13 0 L16.1 9 L25.6 9.2 L18 15 L20.8 24.2 L13 18.7 L5.2 24.2 L8 15 L0.4 9.2 L9.9 9 Z" fill="#afb1b3"/></svg>
<div style="position:absolute;left:2840px;top:116px;width:2px;height:1505px;background:#323232;"></div>
<svg style="position:absolute;left:2846px;top:132px;" width="34" height="30" viewBox="0 0 34 30"><text x="3" y="25.4" font-family="Liberation Sans, sans-serif" font-weight="bold" font-style="italic" font-size="34" textLength="25.5" lengthAdjust="spacingAndGlyphs" fill="#afb1b3">m</text></svg>
<div style="position:absolute;left:2851.3px;top:171.7px;width:0;height:0;transform:rotate(90deg);transform-origin:0 0"><span class="t " style="left:0.00px;top:-23.07px;height:30px;line-height:30px;font-size:23.3px;letter-spacing:-0.031px;color:#bbbbbb;">Maven</span></div>
<svg style="position:absolute;left:2851.6px;top:285.4px;" width="23" height="23" viewBox="0 0 23 23"><circle cx="11.35" cy="11.4" r="11.35" fill="#afb1b3"/><g fill="#3c3f41"><path d="M10.6 5.8 H13.8 L15 3.3 C18.5 5 20.2 8.5 20.2 11.4 C20.2 14 19.4 16 18 17.8 L15.3 15.9 L14.3 11.2 H7.1 L6.7 9.8 L10.6 9.2 Z"/><path d="M2.6 9.6 L10.3 19.2 L9.9 20.4 C5.6 19.6 2.4 15.6 2.4 11.4 C2.4 10.8 2.5 10.2 2.6 9.6 Z"/></g></svg>
<div style="position:absolute;left:2851.3px;top:318.9px;width:0;height:0;transform:rotate(90deg);transform-origin:0 0"><span class="t " style="left:0.00px;top:-23.07px;height:30px;line-height:30px;font-size:23.3px;letter-spacing:0.253px;color:#bbbbbb;">RestfulTool</span></div>
<svg style="position:absolute;left:2851.8px;top:480.1px;" width="22.4" height="24.6" viewBox="0 0 22.4 24.6"><path d="M0 3.7 A11.2 3.5 0 0 1 22.4 3.7 V20.9 A11.2 3.5 0 0 1 0 20.9 Z" fill="#afb1b3"/><g fill="none" stroke="#3c3f41" stroke-width="1.5"><path d="M-0.5 5.4 A11.7 2.4 0 0 0 22.9 5.4"/><path d="M-0.5 11.2 A11.7 2.4 0 0 0 22.9 11.2"/><path d="M-0.5 16.9 A11.7 2.4 0 0 0 22.9 16.9"/></g></svg>
<div style="position:absolute;left:2851.3px;top:515.5px;width:0;height:0;transform:rotate(90deg);transform-origin:0 0"><span class="t " style="left:0.00px;top:-23.07px;height:30px;line-height:30px;font-size:23.3px;letter-spacing:-0.678px;color:#bbbbbb;">Database</span></div>
<svg style="position:absolute;left:2853px;top:650.8px;" width="20" height="23.3" viewBox="0 0 20 23.3"><g fill="#afb1b3"><circle cx="10" cy="4" r="4"/><path d="M8.3 7 H11.7 L12 11 C14.5 13 15 16 15 18.4 A5 4.9 0 0 1 5 18.4 C5 16 5.5 13 8 11 Z"/><rect x="0" y="9.8" width="20" height="2"/></g><g stroke="#afb1b3" stroke-width="2" fill="none"><path d="M1 3 Q3 8 9 10.5 M19 3 Q17 8 11 10.5"/><path d="M8.5 11.5 Q2.5 14 1.5 17 V23.2 M11.5 11.5 Q17.5 14 18.5 17 V23.2"/></g></svg>
<div style="position:absolute;left:2851.3px;top:686px;width:0;height:0;transform:rotate(90deg);transform-origin:0 0"><span class="t " style="left:0.00px;top:-23.07px;height:30px;line-height:30px;font-size:23.3px;letter-spacing:0.513px;color:#bbbbbb;">Ant</span></div>
<div style="position:absolute;left:2152px;top:1330px;width:676.5px;height:151.5px;background:#4e5052;box-shadow:0 3px 10px 2px rgba(0,0,0,0.45);border-radius:3px;border:1px solid #56585a;box-sizing:border-box;"></div>
<div style="position:absolute;left:2152px;top:1506px;width:676.5px;height:97.5px;background:#4e5052;box-shadow:0 3px 10px 2px rgba(0,0,0,0.45);border-radius:3px;border:1px solid #56585a;box-sizing:border-box;"></div>
<svg style="position:absolute;left:2173.5px;top:1348px;" width="30" height="26" viewBox="0 0 30 26"><path d="M27.5 0 C27 3.5 29.5 12.5 25.5 19 C21.5 25.3 11 26 5.2 22.5 L1.8 25 L0.5 23 L3.5 20.5 C-1.8 14 1.8 6.4 10.4 4.8 C18.4 3.4 24.6 4 27.5 0 Z" fill="#5f9f47"/></svg>
<span class="t " style="left:2216.70px;top:1345.66px;height:33px;line-height:33px;font-size:25.5px;letter-spacing:-0.186px;color:#bbbbbb;font-weight:bold;">Spring Configuration Check</span>
<span class="t " style="left:2216.70px;top:1385.26px;height:33px;line-height:33px;font-size:25.5px;letter-spacing:0.182px;color:#bbbbbb;">Unmapped Spring configuration files found....</span>
<svg style="position:absolute;left:2783px;top:1395px;" width="26" height="16" viewBox="0 0 26 16"><path d="M2 2.5 L13 12.5 L24 2.5" fill="none" stroke="#6c7880" stroke-width="2.6"/></svg>
<span class="t " style="left:2216.70px;top:1432.86px;height:33px;line-height:33px;font-size:25.5px;letter-spacing:-0.127px;color:#589df6;">Show Help</span>
<span class="t " style="left:2373.00px;top:1432.86px;height:33px;line-height:33px;font-size:25.5px;letter-spacing:-0.809px;color:#589df6;">Disable...</span>
<svg style="position:absolute;left:2173.8px;top:1521.6px;" width="29" height="29" viewBox="0 0 29 29"><circle cx="14.2" cy="14.2" r="14.2" fill="#3592c4"/><rect x="12.4" y="11.6" width="3.8" height="10.4" fill="#1f3440"/><circle cx="14.3" cy="7.6" r="2.2" fill="#1f3440"/></svg>
<span class="t " style="left:2216.70px;top:1521.36px;height:33px;line-height:33px;font-size:25.5px;letter-spacing:0.016px;color:#bbbbbb;font-weight:bold;">IntelliJ IDEA 2022.2.4 available</span>
<span class="t " style="left:2216.70px;top:1554.86px;height:33px;line-height:33px;font-size:25.5px;letter-spacing:-0.397px;color:#589df6;">Update...</span>
<div style="position:absolute;left:0px;top:1620px;width:2880px;height:86px;background:#3c3f41;"></div>
<div style="position:absolute;left:0px;top:1620px;width:2880px;height:2px;background:#323232;"></div>
<div style="position:absolute;left:0px;top:1664.5px;width:2880px;height:2px;background:#484a4b;"></div>
<div style="position:absolute;left:0px;top:1703.5px;width:2880px;height:3px;background:#a6abb5;"></div>
<svg style="position:absolute;left:66px;top:1634px;" width="21" height="22" viewBox="0 0 21 22"><path d="M0 0 H4 V22 H0 Z M4 12 H12 V8 H16 V16 H4 Z M7 8 L14 0 L21 8 Z" fill="#afb1b3"/></svg>
<span class="t " style="left:96.00px;top:1631.43px;height:30px;line-height:30px;font-size:23.3px;letter-spacing:-0.217px;color:#bbbbbb;"><u>9</u>: Git</span>
<svg style="position:absolute;left:195.6px;top:1635px;" width="16.4" height="20" viewBox="0 0 16.4 20"><path d="M0 0 L16.4 10.0 L0 20 Z" fill="#afb1b3"/></svg>
<span class="t " style="left:225.90px;top:1631.43px;height:30px;line-height:30px;font-size:23.3px;letter-spacing:-0.508px;color:#bbbbbb;"><u>4</u>: Run</span>
<svg style="position:absolute;left:338px;top:1636.4px;" width="21" height="17" viewBox="0 0 21 17"><rect x="0" y="0" width="4" height="3.6" fill="#afb1b3"/><rect x="6" y="0" width="14.4" height="3.6" fill="#afb1b3"/><rect x="0" y="6.5" width="4" height="3.6" fill="#afb1b3"/><rect x="6" y="6.5" width="14.4" height="3.6" fill="#afb1b3"/><rect x="0" y="13" width="4" height="3.6" fill="#afb1b3"/><rect x="6" y="13" width="14.4" height="3.6" fill="#afb1b3"/></svg>
<span class="t " style="left:368.40px;top:1631.43px;height:30px;line-height:30px;font-size:23.3px;letter-spacing:-0.360px;color:#bbbbbb;"><u>6</u>: TODO</span>
<svg style="position:absolute;left:506px;top:1636.4px;" width="22" height="17" viewBox="0 0 22 17"><rect x="0" y="0" width="22" height="4" fill="#afb1b3"/><rect x="0" y="6.3" width="12" height="4" fill="#afb1b3"/><rect x="0" y="12.6" width="18" height="4" fill="#afb1b3"/></svg>
<span class="t " style="left:538.50px;top:1631.43px;height:30px;line-height:30px;font-size:23.3px;letter-spacing:-0.629px;color:#bbbbbb;"><u>0</u>: Messages</span>
<svg style="position:absolute;left:708px;top:1633px;" width="26.3" height="23.8" viewBox="0 0 31 28"><polygon fill="#afb1b3" points="0,10.9 10.9,0 18.2,0 18.2,1.4 15.4,2.5 12.2,6.2 20.4,12.6 30.2,22.9 25.4,27.9 15.1,18.0 15.1,16.6 8.7,10.3 4.2,15.4"/></svg>
<span class="t " style="left:743.00px;top:1631.43px;height:30px;line-height:30px;font-size:23.3px;letter-spacing:-0.005px;color:#bbbbbb;">Build</span>
<svg style="position:absolute;left:835px;top:1633.5px;" width="25" height="22" viewBox="0 0 25 22"><path d="M24 0 C23.5 3 25.5 11 22 16.5 C18.5 22 9.5 22.5 4.5 19.5 L1.5 21.5 L0.5 20 L3 17.8 C-1.5 12 1.5 5.5 9 4.2 C16 3 21.5 3.5 24 0 Z" fill="#afb1b3"/></svg>
<span class="t " style="left:869.00px;top:1631.43px;height:30px;line-height:30px;font-size:23.3px;letter-spacing:-0.072px;color:#bbbbbb;">Spring</span>
<svg style="position:absolute;left:981.6px;top:1634px;" width="23" height="21" viewBox="0 0 23 21"><rect x="0" y="0" width="22.4" height="20.4" fill="#afb1b3"/><path d="M3.2 4.2 L8.6 9.2 L3.2 14.2" fill="none" stroke="#3c3f41" stroke-width="2.2"/><rect x="10.6" y="13.6" width="7.6" height="2.2" fill="#3c3f41"/></svg>
<span class="t " style="left:1014.60px;top:1631.43px;height:30px;line-height:30px;font-size:23.3px;letter-spacing:0.336px;color:#bbbbbb;">Terminal</span>
<svg style="position:absolute;left:2682px;top:1632.6px;" width="26" height="26" viewBox="0 0 26 26"><circle cx="13" cy="13" r="12.8" fill="#e8a83e"/><text x="13" y="20" text-anchor="middle" font-family="Liberation Sans, sans-serif" font-weight="bold" font-size="19" fill="#3a2f1c">2</text></svg>
<span class="t " style="left:2717.20px;top:1631.93px;height:30px;line-height:30px;font-size:23.3px;letter-spacing:-0.440px;color:#bbbbbb;">Event Log</span>
<svg style="position:absolute;left:12px;top:1674px;" width="24" height="24" viewBox="0 0 24 24"><path d="M5.5 1 H23 V18.5 H5.5 Z" fill="none" stroke="#afb1b3" stroke-width="2"/><path d="M1 5.5 V23 H18.5" fill="none" stroke="#afb1b3" stroke-width="2"/></svg>
<span class="t " style="left:55.00px;top:1668.76px;height:33px;line-height:33px;font-size:25.5px;letter-spacing:-0.027px;color:#bbbbbb;">Build completed successfully in 3 s 430 ms (2 minutes ago)</span>
<span class="t " style="left:2337.20px;top:1668.76px;height:33px;line-height:33px;font-size:25.5px;letter-spacing:-1.201px;color:#bbbbbb;">529:21</span>
<span class="t " style="left:2437.60px;top:1668.76px;height:33px;line-height:33px;font-size:25.5px;letter-spacing:-7.358px;color:#8a8c8d;">LF</span>
<span class="t " style="left:2487.60px;top:1668.76px;height:33px;line-height:33px;font-size:25.5px;letter-spacing:-1.960px;color:#8a8c8d;">UTF-8</span>
<div style="position:absolute;left:2540px;top:1652.3px;width:338.6px;height:50.6px;background:#fff;border:1px solid #b9c6d8;border-radius:5px;box-sizing:border-box;overflow:hidden"><div style="position:absolute;right:0;top:0;width:70px;height:50px;background:linear-gradient(120deg,rgba(255,255,255,0) 20%,rgba(240,215,250,.8) 55%,rgba(215,240,235,.8) 85%)"></div></div>
<svg style="position:absolute;left:2515px;top:1636px;" width="80" height="70" viewBox="2515 1636 80 70"><defs><linearGradient id="sg" x1="1" y1="0" x2="0.2" y2="1"><stop offset="0" stop-color="#f9783f"/><stop offset="1" stop-color="#f04a10"/></linearGradient></defs>
<polygon points="2529.8,1660.1 2572,1648.6 2583.6,1685.2 2544.1,1700.2" fill="url(#sg)" stroke="url(#sg)" stroke-width="10" stroke-linejoin="round"/>
<g transform="translate(2555.8 1674.4) rotate(-16) translate(-25.75 -25.25)">
<path d="M44 15 C31 10.5 9.5 12 9.5 21.5 C9.5 30.5 42.5 25.5 42 34 C41.5 41.5 20 41.5 8.5 37.5" fill="none" stroke="#fff" stroke-width="8.6"/></g></svg>
<span class="t" style="left:2598.8px;top:1658.6px;height:40px;line-height:40px;font-size:28px;transform:scaleX(1.09);transform-origin:0 0;font-weight:bold;color:#0a6fdc;font-family:'Liberation Sans','Noto Sans CJK SC',sans-serif">中</span>
<svg style="position:absolute;left:2652px;top:1668px;" width="26" height="22" viewBox="0 0 26 22"><circle cx="4.4" cy="4.4" r="4.2" fill="#0a6fdc"/><circle cx="19" cy="13" r="4.3" fill="#0a6fdc"/><path d="M23.3 13 q0.4 6 -5.5 8.6 l-0.8 -1.6 q3 -1.6 3 -4.6 z" fill="#0a6fdc"/></svg>
<svg style="position:absolute;left:2699.5px;top:1662.5px;" width="23" height="32" viewBox="0 0 23 32"><rect x="6.5" y="0" width="10" height="20" rx="5" fill="#0a6fdc"/><path d="M1.3 14 A10.2 10.2 0 0 0 21.7 14" fill="none" stroke="#0a6fdc" stroke-width="2.6"/><rect x="10.2" y="24" width="2.6" height="5" fill="#0a6fdc"/><rect x="5.5" y="28.6" width="12" height="2.6" rx="1.3" fill="#0a6fdc"/></svg>
<svg style="position:absolute;left:2745.5px;top:1667px;" width="29" height="24" viewBox="0 0 29 24"><rect x="1.3" y="1.3" width="25.6" height="21" rx="3.5" fill="none" stroke="#0a6fdc" stroke-width="2.6"/><rect x="4.6" y="5.4" width="3.8" height="3.6" fill="#0a6fdc"/><rect x="9.6" y="5.4" width="3.8" height="3.6" fill="#0a6fdc"/><rect x="14.6" y="5.4" width="3.8" height="3.6" fill="#0a6fdc"/><rect x="19.6" y="5.4" width="3.8" height="3.6" fill="#0a6fdc"/><rect x="4.6" y="10.6" width="3.8" height="3.6" fill="#0a6fdc"/><rect x="9.6" y="10.6" width="3.8" height="3.6" fill="#0a6fdc"/><rect x="14.6" y="10.6" width="3.8" height="3.6" fill="#0a6fdc"/><rect x="19.6" y="10.6" width="3.8" height="3.6" fill="#0a6fdc"/><rect x="6" y="16" width="16" height="3.2" fill="#0a6fdc"/></svg>
<svg style="position:absolute;left:2792.5px;top:1665px;" width="30" height="27" viewBox="0 0 30 27"><path d="M9 0 C11 4 19 4 21 0 L30 4.5 L27 13 L23.5 11.5 V27 H6.5 V11.5 L3 13 L0 4.5 Z" fill="#0a6fdc"/></svg>
<svg style="position:absolute;left:2842px;top:1666px;" width="26" height="26" viewBox="0 0 26 26"><defs><linearGradient id="gg" x1="0" y1="0" x2="1" y2="1"><stop offset="0" stop-color="#e9a4c4"/><stop offset="0.5" stop-color="#c9a1ee"/><stop offset="1" stop-color="#8fb4f0"/></linearGradient></defs><g fill="url(#gg)"><rect x="0" y="0" width="11.5" height="11.5" rx="3"/><rect x="14.5" y="14.5" width="11.5" height="11.5" rx="3"/><rect x="0" y="14.5" width="11.5" height="11.5" rx="3"/></g><rect x="15.8" y="1.3" width="9" height="9" rx="2" fill="none" stroke="#c9a1ee" stroke-width="2.6"/></svg>
<span class="t" style="left:2653.5px;top:1674px;height:28px;line-height:28px;font-size:19.1px;color:#919191;letter-spacing:0px;font-family:'Liberation Sans','Noto Sans CJK SC',sans-serif;text-shadow:0 0 1.5px #fff,0 0 1.5px #fff,0 0 1px #fff">CSDN @只因为你而温柔</span>
</body></html>
